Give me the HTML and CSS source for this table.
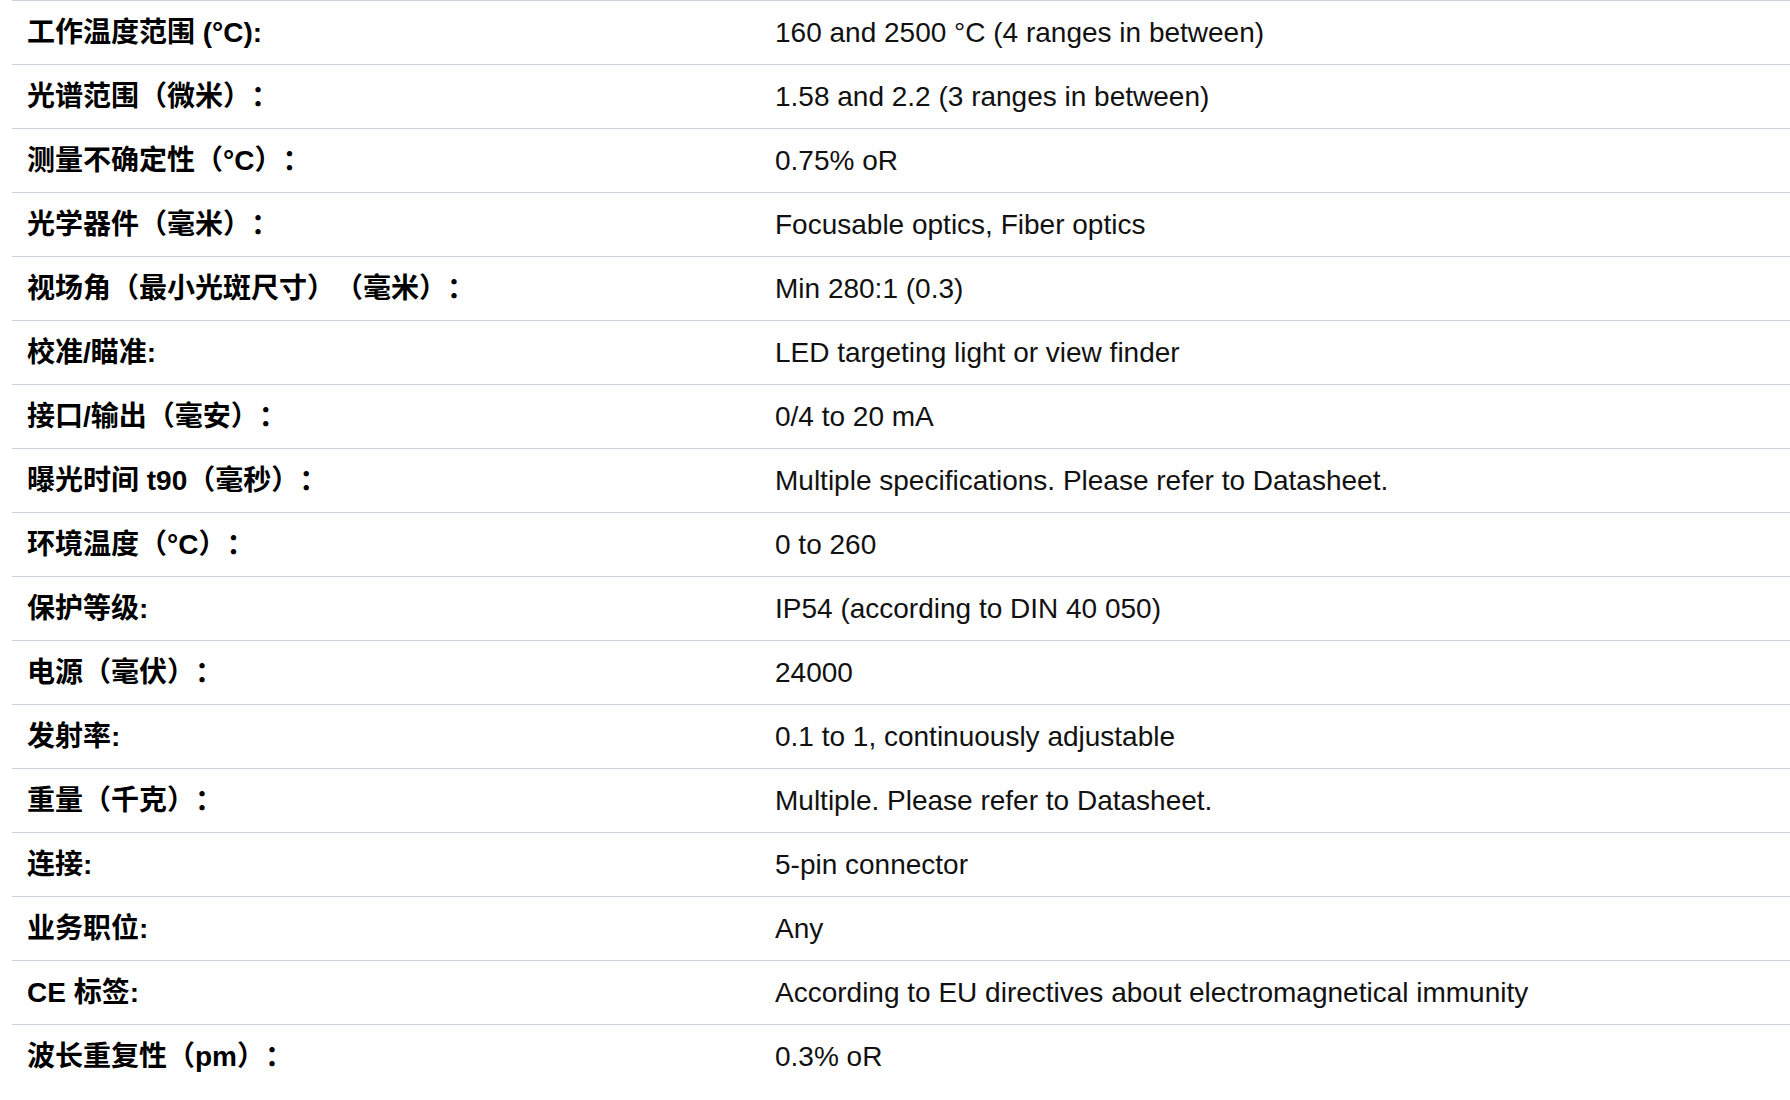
FILE: index.html
```html
<!DOCTYPE html>
<html lang="zh">
<head>
<meta charset="utf-8">
<title>Specs</title>
<link rel="stylesheet" href="styles.css">
</head>
<body>
<table class="spec">
<tbody>
<tr><td class="k">工作温度范围 (°C):</td><td class="v">160 and 2500 °C (4 ranges in between)</td></tr>
<tr><td class="k">光谱范围（微米）：</td><td class="v">1.58 and 2.2 (3 ranges in between)</td></tr>
<tr><td class="k">测量不确定性（°C）：</td><td class="v">0.75% oR</td></tr>
<tr><td class="k">光学器件（毫米）：</td><td class="v">Focusable optics, Fiber optics</td></tr>
<tr><td class="k">视场角（最小光斑尺寸）（毫米）：</td><td class="v">Min 280:1 (0.3)</td></tr>
<tr><td class="k">校准/瞄准:</td><td class="v">LED targeting light or view finder</td></tr>
<tr><td class="k">接口/输出（毫安）：</td><td class="v">0/4 to 20 mA</td></tr>
<tr><td class="k">曝光时间 t90（毫秒）：</td><td class="v">Multiple specifications. Please refer to Datasheet.</td></tr>
<tr><td class="k">环境温度（°C）：</td><td class="v">0 to 260</td></tr>
<tr><td class="k">保护等级:</td><td class="v">IP54 (according to DIN 40 050)</td></tr>
<tr><td class="k">电源（毫伏）：</td><td class="v">24000</td></tr>
<tr><td class="k">发射率:</td><td class="v">0.1 to 1, continuously adjustable</td></tr>
<tr><td class="k">重量（千克）：</td><td class="v">Multiple. Please refer to Datasheet.</td></tr>
<tr><td class="k">连接:</td><td class="v">5-pin connector</td></tr>
<tr><td class="k">业务职位:</td><td class="v">Any</td></tr>
<tr><td class="k">CE 标签:</td><td class="v">According to EU directives about electromagnetical immunity</td></tr>
<tr><td class="k">波长重复性（pm）：</td><td class="v">0.3% oR</td></tr>
</tbody>
</table>
</body>
</html>
```

FILE: styles.css
```css
html, body {
  margin: 0;
  padding: 0;
  background: #ffffff;
}
body {
  padding-left: 12px;
  font-family: "Liberation Sans", Arial, "Noto Sans CJK SC", sans-serif;
  font-size: 28px;
  line-height: 33px;
  color: #111111;
  text-spacing-trim: space-all;
}
.spec {
  width: 1778px;
  border-collapse: collapse;
  table-layout: fixed;
}
.spec td {
  border-top: 1px solid #cad4e0;
  padding: 15px 15px;
  vertical-align: middle;
  white-space: nowrap;
}
.spec td.k {
  width: 718px;
  font-weight: bold;
  color: #000000;
}
.spec td.v {
  font-weight: normal;
}
```
